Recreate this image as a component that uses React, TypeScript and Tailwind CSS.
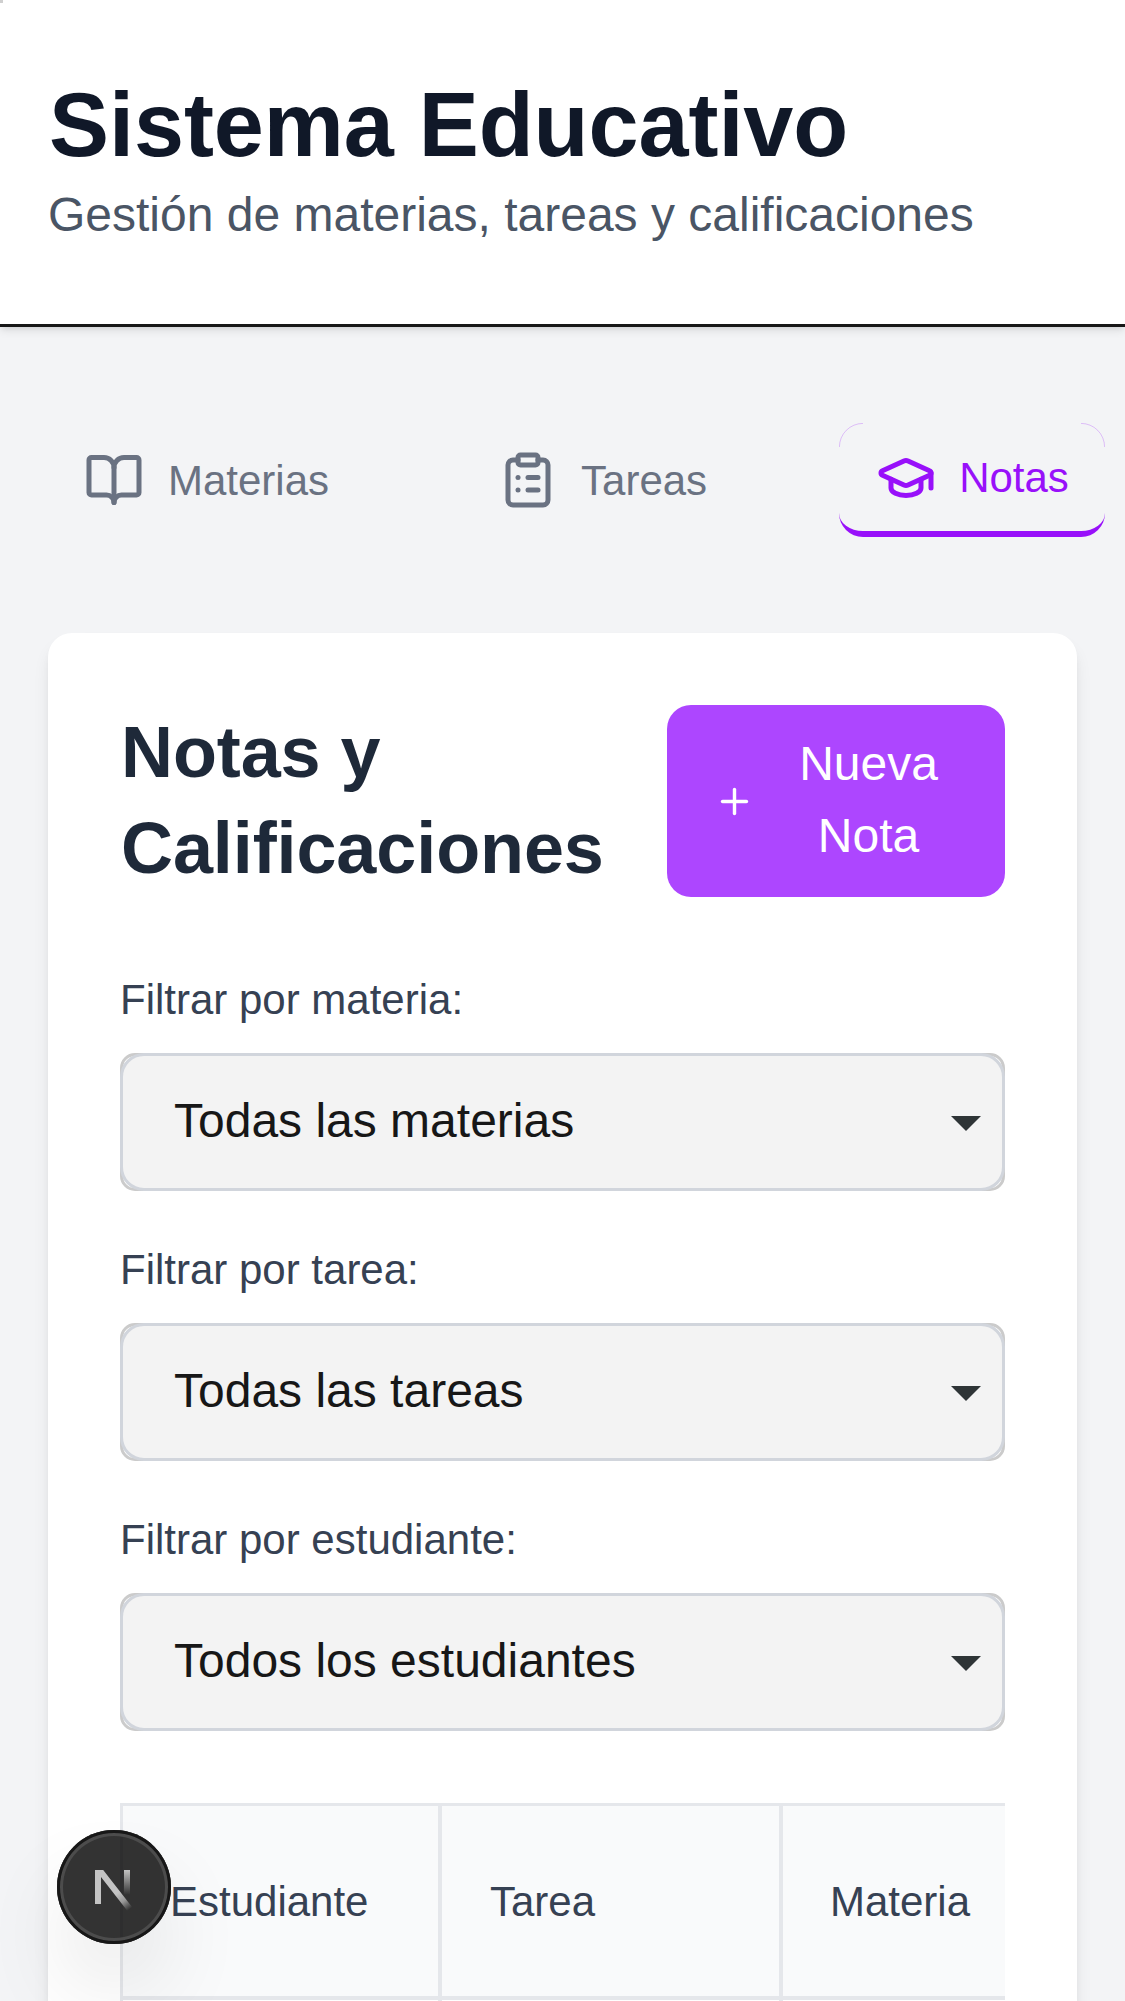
import type { ReactNode } from "react";
import { BookOpen, ClipboardList, GraduationCap, Plus } from "lucide-react";

function Tab({ icon, label, active = false }: { icon: ReactNode; label: string; active?: boolean }) {
  return (
    <button
      className={
        active
          ? "relative flex items-center rounded-[24px] border-b-[6px] border-[#9810fa] px-[36px] py-[24px] text-[#9810fa]"
          : "flex items-center rounded-[24px] px-[36px] py-[24px] text-[#6a7282]"
      }
    >
      {active && (
        <span className="absolute inset-x-0 top-0 flex justify-between">
          <svg width="24" height="24" viewBox="0 0 24 24" fill="none" stroke="#9810fa" strokeOpacity="0.3" strokeWidth="0.8">
            <path d="M0.4 24A23.6 23.6 0 0 1 24 0.4" />
          </svg>
          <svg width="24" height="24" viewBox="0 0 24 24" fill="none" stroke="#9810fa" strokeOpacity="0.3" strokeWidth="0.8">
            <path d="M0 0.4A23.6 23.6 0 0 1 23.6 24" />
          </svg>
        </span>
      )}
      <span className="mr-[24px]">{icon}</span>
      <span className="translate-y-px">{label}</span>
    </button>
  );
}

function Filter({ label, value }: { label: string; value: string }) {
  return (
    <div>
      <div className="mb-[23px] pt-px text-[42px] leading-[60px] text-[#364153]">{label}</div>
      <div className="relative flex h-[138px] items-center justify-between rounded-[15px] border-[3px] border-[#cbcbcb] bg-white pr-[21px] pl-[51px]">
        <div className="absolute -inset-[3px] rounded-[24px] border-[3px] border-[#d1d5dc] bg-[#f3f3f3]" />
        <span className="relative mb-[2px] text-[48px] leading-[72px] text-[#171717]">{value}</span>
        <svg width="30" height="15" viewBox="0 0 30 15" className="relative mt-[3px]">
          <path d="M0 0H30L15 15Z" fill="#2e3436" />
        </svg>
      </div>
    </div>
  );
}

function NextBadge() {
  return (
    <div className="absolute top-[1830px] left-[57px] flex h-[114px] w-[114px] items-center justify-center rounded-full bg-black/80 shadow-[inset_0_0_0_3px_#171717,inset_0_0_0_6px_#4c4c4c,0_48px_96px_-24px_rgba(0,0,0,0.24)]">
      <svg width="120" height="120" viewBox="0 0 40 40" fill="none" className="shrink-0">
        <defs>
          <linearGradient id="diag" x1="21.2" y1="22" x2="25.2" y2="27.4" gradientUnits="userSpaceOnUse">
            <stop stopColor="#c4c4c4" />
            <stop offset="0.5" stopColor="#c4c4c4" stopOpacity=".7" />
            <stop offset="1" stopColor="#c4c4c4" stopOpacity="0" />
          </linearGradient>
          <linearGradient id="stem" x1="24" y1="14.3" x2="24" y2="22.6" gradientUnits="userSpaceOnUse">
            <stop stopColor="#c4c4c4" />
            <stop offset="1" stopColor="#c4c4c4" stopOpacity="0" />
          </linearGradient>
        </defs>
        <path d="M13.67 14.33H16.4L26.6 27.4L24.8 28.4L15.67 16.7V25.67H13.67Z" fill="url(#diag)" />
        <path d="M24.33 14.33V22.6" stroke="url(#stem)" strokeWidth="2" />
      </svg>
    </div>
  );
}

export default function App() {
  return (
    <div className="relative h-[2001px] w-[1125px] overflow-hidden bg-[#f3f4f6] font-['Liberation_Sans',Arial,sans-serif]">
      <header className="border-b-[3px] border-[#171717] bg-white px-[48px] pt-[71px] pb-[73px] shadow-[0_3px_9px_rgba(0,0,0,0.1),0_3px_6px_-3px_rgba(0,0,0,0.1)]">
        <h1 className="pl-px text-[90px] leading-[108px] font-bold tracking-[-0.06px] text-[#101828]">Sistema Educativo</h1>
        <p className="text-[48px] leading-[72px] text-[#4a5565]">Gestión de materias, tareas y calificaciones</p>
      </header>
      <div className="absolute top-0 left-0 h-[3px] w-[3px] bg-[#cfcfcf]" />

      <main className="px-[48px] pt-[96px]">
        <nav className="mb-[96px] flex w-max gap-[96px] text-[42px] leading-[60px]">
          <Tab icon={<BookOpen size={60} />} label="Materias" />
          <Tab icon={<ClipboardList size={60} className="translate-x-px" />} label="Tareas" />
          <Tab icon={<GraduationCap size={60} className="translate-x-px translate-y-px" />} label="Notas" active />
        </nav>

        <section className="h-[1500px] rounded-[24px] bg-white p-[72px] shadow-[0_12px_18px_-3px_rgba(0,0,0,0.1),0_6px_12px_-6px_rgba(0,0,0,0.1)]">
          <div className="mb-[72px] flex h-[192px] items-center justify-between">
            <h2 className="-translate-y-px pl-px text-[72px] leading-[96px] font-bold tracking-[-0.1px] text-[#1e2939]">
              Notas y<br />Calificaciones
            </h2>
            <button className="flex w-[338px] items-center rounded-[24px] bg-[#ad46ff] px-[48px] py-[24px] text-[48px] leading-[72px] text-white">
              <Plus size={41} className="-ml-px mr-[25px] shrink-0" />
              <span className="flex-1 -translate-y-px text-center">Nueva<br />Nota</span>
            </button>
          </div>

          <div className="mb-[72px] flex flex-col gap-[48px]">
            <Filter label="Filtrar por materia:" value="Todas las materias" />
            <Filter label="Filtrar por tarea:" value="Todas las tareas" />
            <Filter label="Filtrar por estudiante:" value="Todos los estudiantes" />
          </div>

          <div className="flex h-[197px] border-y-[3px] border-b-[4px] border-[#e5e7eb] bg-[#f9fafb] text-[42px] leading-[60px] text-[#364153]">
            <div className="flex w-[318px] items-center border-l-[3px] border-[#e5e7eb] pt-[2px] pl-[47px]">Estudiante</div>
            <div className="flex w-[341px] items-center border-l-[4px] border-[#e5e7eb] pt-[2px] pl-[48px]">Tarea</div>
            <div className="flex flex-1 items-center border-l-[4px] border-[#e5e7eb] pt-[2px] pl-[47px]">Materia</div>
          </div>
          <div className="flex h-[20px]">
            <div className="w-[318px] border-l-[3px] border-[#e5e7eb]" />
            <div className="w-[341px] border-l-[4px] border-[#e5e7eb]" />
            <div className="flex-1 border-l-[4px] border-[#e5e7eb]" />
          </div>
        </section>
      </main>

      <NextBadge />
    </div>
  );
}
